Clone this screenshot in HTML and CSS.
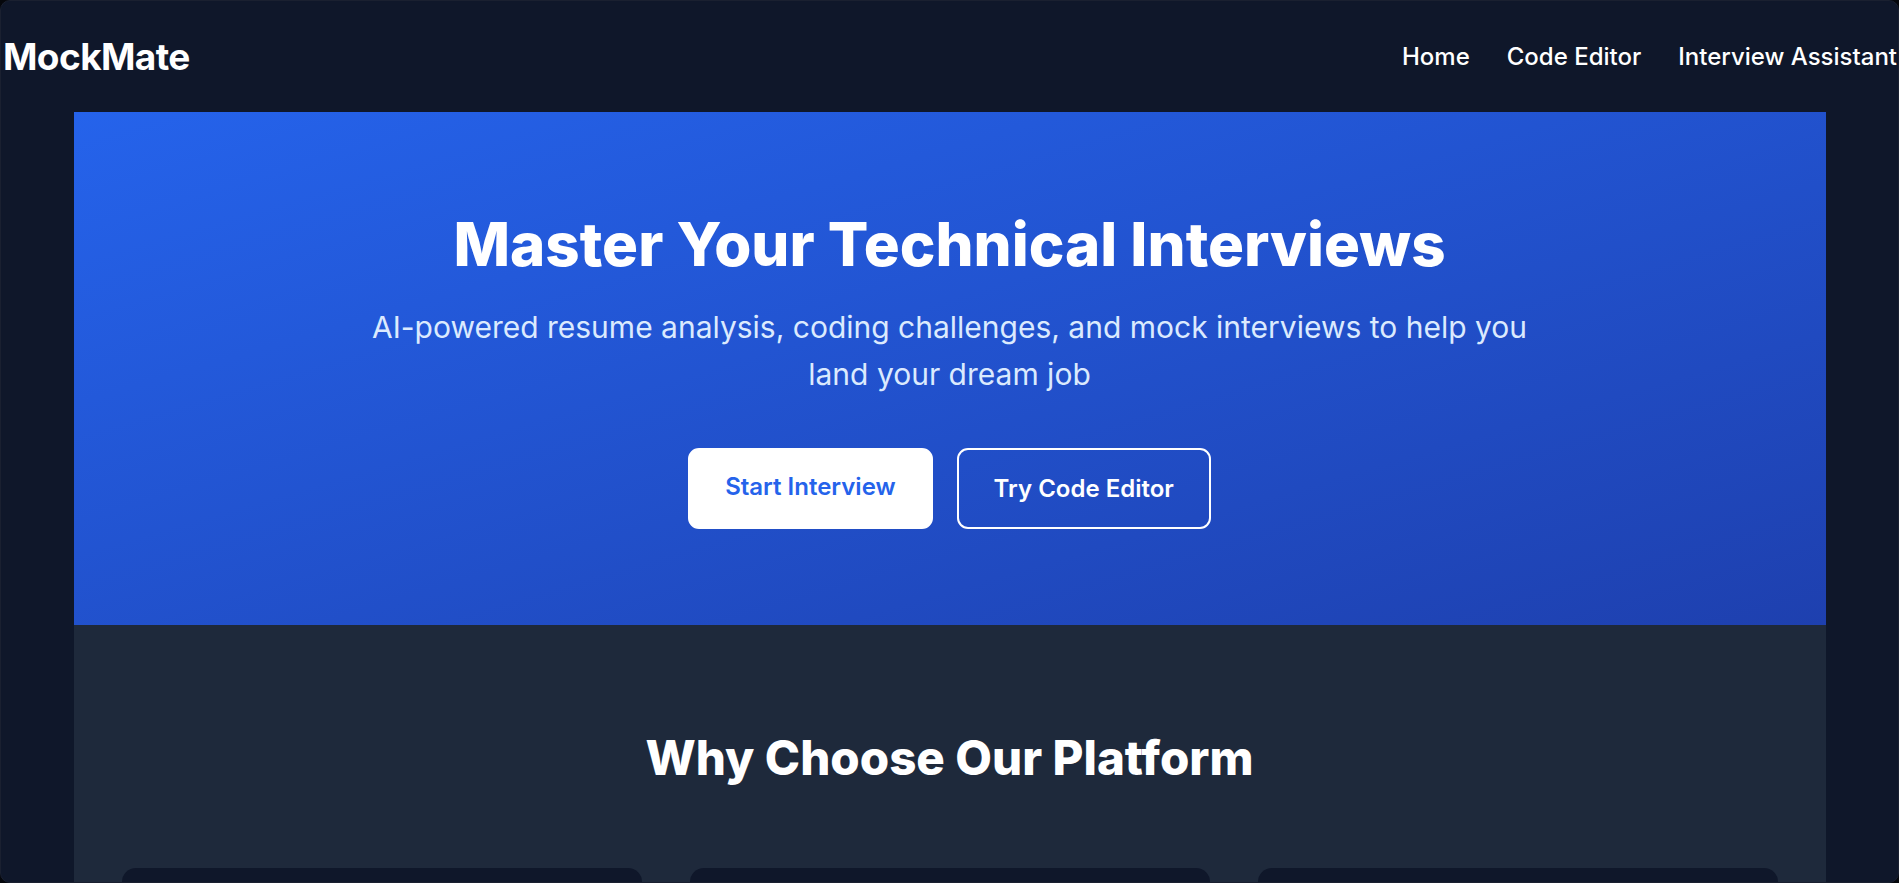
FILE: index.html
```html
<!DOCTYPE html>
<html lang="en">
<head>
<meta charset="utf-8">
<title>MockMate</title>
<link rel="stylesheet" href="styles.css">
</head>
<body>
<div class="frame">
  <header class="topbar">
    <a class="logo" href="#">MockMate</a>
    <nav class="nav">
      <a href="#">Home</a>
      <a href="#">Code Editor</a>
      <a href="#">Interview Assistant</a>
    </nav>
  </header>
  <main class="main">
    <section class="hero">
      <h1 class="hero-title">Master Your Technical Interviews</h1>
      <p class="hero-sub">AI-powered resume analysis, coding challenges, and mock interviews to help you land your dream job</p>
      <div class="hero-actions">
        <a class="btn btn-solid" href="#">Start Interview</a>
        <a class="btn btn-outline" href="#">Try Code Editor</a>
      </div>
    </section>
    <section class="features">
      <h2 class="features-title">Why Choose Our Platform</h2>
      <div class="feature-grid">
        <div class="card"></div>
        <div class="card"></div>
        <div class="card"></div>
      </div>
    </section>
  </main>
</div>
</body>
</html>
```

FILE: styles.css
```css
html {
  background: #05070c;
}
body {
  margin: 0;
  font-family: Inter, "Noto Sans", "Liberation Sans", sans-serif;
  font-feature-settings: "liga" 0, "calt" 0;
  color: #ffffff;
}
.frame {
  box-sizing: border-box;
  height: 100vh;
  overflow: hidden;
  background: #0f172a;
  border: 1px solid #1a2030;
  border-radius: 10px;
}
.topbar {
  height: 111px;
  display: flex;
  align-items: center;
  justify-content: space-between;
  padding: 0 1px 0 2px;
}
.logo {
  color: #ffffff;
  text-decoration: none;
  font-size: 37px;
  font-weight: 700;
  letter-spacing: -0.6px;
}
.nav {
  display: flex;
  gap: 37px;
}
.nav a {
  color: #ffffff;
  text-decoration: none;
  font-size: 24px;
  font-weight: 500;
}
.main {
  width: 1752px;
  margin: 0 auto;
}
.hero {
  height: 513px;
  box-sizing: border-box;
  padding-top: 102px;
  text-align: center;
  background: linear-gradient(to bottom right, #2563eb, #1e40af);
}
.hero-title {
  margin: 0;
  font-size: 60px;
  line-height: 60px;
  font-weight: 800;
}
.hero-sub {
  margin: 30px auto 0;
  max-width: 1180px;
  font-size: 30px;
  line-height: 47px;
  color: #dbeafe;
}
.hero-actions {
  margin-top: 50px;
  display: flex;
  justify-content: center;
  gap: 24px;
}
.btn {
  box-sizing: border-box;
  height: 81px;
  display: flex;
  align-items: center;
  padding: 0 35px;
  border-radius: 11px;
  border: 2px solid #ffffff;
  font-size: 24px;
  font-weight: 600;
  text-decoration: none;
}
.btn-solid {
  background: #ffffff;
  color: #2563eb;
  padding-bottom: 4px;
}
.btn-outline {
  background: transparent;
  color: #ffffff;
}
.features {
  background: #1e293b;
  padding: 108px 48px 60px;
}
.features-title {
  margin: 0 0 85px;
  text-align: center;
  font-size: 47.5px;
  line-height: 50px;
  font-weight: 800;
}
.feature-grid {
  display: grid;
  grid-template-columns: repeat(3, 1fr);
  gap: 48px;
}
.card {
  height: 300px;
  background: #0f172a;
  border-radius: 14px;
}
```
